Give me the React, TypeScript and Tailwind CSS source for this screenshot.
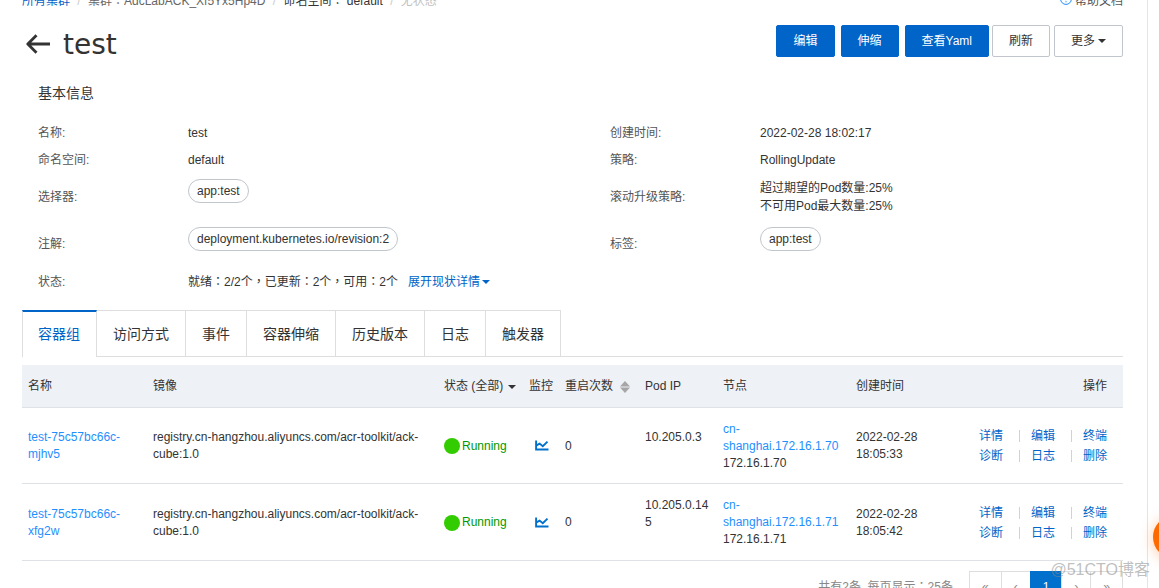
import React from "react";

const tabs = ["容器组", "访问方式", "事件", "容器伸缩", "历史版本", "日志", "触发器"];

const pods = [
  { name: "test-75c57bc66c-mjhv5", ip: "10.205.0.3", node: "cn-shanghai.172.16.1.70", nodeIp: "172.16.1.70", date: "2022-02-28", time: "18:05:33" },
  { name: "test-75c57bc66c-xfg2w", ip: "10.205.0.145", node: "cn-shanghai.172.16.1.71", nodeIp: "172.16.1.71", date: "2022-02-28", time: "18:05:42" },
];

const actions = ["详情", "编辑", "终端", "诊断", "日志", "删除"];

const image = "registry.cn-hangzhou.aliyuncs.com/acr-toolkit/ack-cube:1.0";

function Caret() {
  return (
    <svg width="8" height="4" viewBox="0 0 8 4" className="inline-block shrink-0" aria-hidden="true">
      <path d="M0 0h8L4 4z" fill="currentColor" />
    </svg>
  );
}

function Pill({ children }: { children: React.ReactNode }) {
  return (
    <span className="inline-flex h-6 items-center rounded-full border border-[#c0c6cc] px-2 text-[#333]">{children}</span>
  );
}

function Field({ label, className, children }: { label: string; className: string; children?: React.ReactNode }) {
  return (
    <div className={`flex ${className}`}>
      <dt className="w-[150px] shrink-0 self-center text-[#555]">{label}</dt>
      <dd className="min-w-0">{children}</dd>
    </div>
  );
}

function Primary({ children }: { children: React.ReactNode }) {
  return (
    <button type="button" className="h-8 rounded-xs border border-[#0064c8] bg-[#0064c8] px-4 text-white">{children}</button>
  );
}

function Secondary({ children }: { children: React.ReactNode }) {
  return (
    <button type="button" className="flex h-8 items-center gap-[3px] rounded-xs border border-[#c0c6cc] bg-white px-4 text-[#333]">{children}</button>
  );
}

function ChartIcon() {
  return (
    <svg width="14" height="12" viewBox="0 0 14 12" fill="none" stroke="#0070cc" strokeWidth="1.9" aria-hidden="true">
      <path d="M1.1 0.500v9H13.500" />
      <path d="M1.500 5.300 4.600 3.600l3.200 2.600L12.500 1.600" />
    </svg>
  );
}

export default function App() {
  return (
    <div className="relative flex h-screen overflow-hidden bg-white font-['Liberation_Sans','Noto_Sans_CJK_SC',sans-serif] text-xs leading-[18px] text-[#333]">
      <main className="-mt-2 min-w-0 flex-1 border-r border-[#e3e4e6] pr-6 pl-[22px]">
        <div className="flex justify-between">
          <nav className="flex font-['Liberation_Sans','Noto_Sans_CJK_TC',sans-serif]" aria-label="breadcrumb">
            <a href="#clusters" className="text-[#0064c8]">所有集群</a>
            <span className="w-[18px] text-center text-[#ccc]">/</span>
            <span className="text-[#666]">集群：AdcLabACK_Xf5Yx5Hp4D</span>
            <span className="w-[18px] text-center text-[#ccc]">/</span>
            <span>命名空间： default</span>
            <span className="w-[18px] text-center text-[#ccc]">/</span>
            <span className="text-[#c1c1c1]">无状态</span>
          </nav>
          <a href="#help" className="flex items-center gap-[3px] text-[#555]">
            <svg width="12" height="12" viewBox="0 0 12 12" className="-mt-1" fill="none" stroke="#1e8fff" aria-hidden="true">
              <circle cx="6" cy="6" r="5.4" />
              <path d="M4.3 4.7c0-2.3 3.4-2.2 3.4-.1C7.700 5.800 6 5.700 6 7.200M6 8.200v1.100" />
            </svg>
            帮助文档
          </a>
        </div>

        <header className="mt-[15px] flex items-start justify-between">
          <div className="flex items-start gap-3 pt-0.5 pl-1">
            <button type="button" aria-label="返回" className="pt-[7px] text-[#333]">
              <svg width="25" height="20" viewBox="0 0 25 20" fill="none" stroke="currentColor" strokeWidth="2.800" strokeLinejoin="round" aria-hidden="true">
                <path d="M24 10H2M10.500 1.200 1.800 10l8.700 8.800" />
              </svg>
            </button>
            <h1 className="font-['DejaVu_Sans',sans-serif] text-[28px] leading-9">test</h1>
          </div>
          <div className="flex gap-[3px]">
            <div className="flex gap-1.5">
              <Primary>编辑</Primary>
              <Primary>伸缩</Primary>
              <Primary>查看Yaml</Primary>
            </div>
            <div className="flex gap-1">
              <Secondary>刷新</Secondary>
              <Secondary>更多<Caret /></Secondary>
            </div>
          </div>
        </header>

        <section className="pt-5 pl-4">
          <h2 className="text-sm leading-5">基本信息</h2>
          <dl className="mt-4 grid grid-cols-[572fr_513fr]">
            <Field label="名称:" className="h-[27px] items-center">test</Field>
            <Field label="创建时间:" className="h-[27px] items-center">2022-02-28 18:02:17</Field>
            <Field label="命名空间:" className="h-[27px] items-center">default</Field>
            <Field label="策略:" className="h-[27px] items-center">RollingUpdate</Field>
            <Field label="选择器:" className="h-12 items-start pt-1.5 pb-1.5"><Pill>app:test</Pill></Field>
            <Field label="滚动升级策略:" className="h-12 items-center">
              <p>超过期望的Pod数量:25%</p>
              <p>不可用Pod最大数量:25%</p>
            </Field>
            <Field label="注解:" className="h-[46px] items-start pt-1.5 pb-1.5"><Pill>deployment.kubernetes.io/revision:2</Pill></Field>
            <Field label="标签:" className="h-[46px] items-start pt-1.5 pb-1.5"><Pill>app:test</Pill></Field>
            <Field label="状态:" className="col-span-2 h-[30px] items-center">
              <div className="flex gap-2.5">
                <span className="font-['Liberation_Sans','Noto_Sans_CJK_TC',sans-serif]">就绪：2/2个，已更新：2个，可用：2个</span>
                <button type="button" className="flex items-center gap-0.5 text-[#0064c8]">展开现状详情<Caret /></button>
              </div>
            </Field>
          </dl>
        </section>

        <div role="tablist" className="mt-[13px] flex border-b border-[#dedede] text-sm">
          {tabs.map((tab, i) => (
            <button
              key={tab}
              type="button"
              role="tab"
              aria-selected={i === 0}
              className={
                i === 0
                  ? "-mb-px h-[47px] border-t-2 border-r border-l border-t-[#0064c8] border-r-[#dedede] border-l-[#dedede] bg-white pr-4 pb-0.5 pl-[15px] text-[#0064c8]"
                  : "h-[46px] border-t border-r border-[#dedede] px-4"
              }
            >
              {tab}
            </button>
          ))}
        </div>

        <table className="mt-2 w-full table-fixed border-collapse text-left leading-[17px]">
          <colgroup>
            <col className="w-[125px]" />
            <col />
            <col className="w-[85px]" />
            <col className="w-[36px]" />
            <col className="w-[80px]" />
            <col className="w-[78px]" />
            <col className="w-[133px]" />
            <col className="w-[100px]" />
            <col className="w-[173px]" />
          </colgroup>
          <thead>
            <tr className="h-[42px] border-b border-[#dee2e6] bg-[#eef1f6] whitespace-nowrap *:pt-0.5 *:pl-1.5 *:font-normal">
              <th>名称</th>
              <th>镜像</th>
              <th><button type="button" className="flex items-center gap-[5px]">状态 (全部)<Caret /></button></th>
              <th>监控</th>
              <th>
                <button type="button" className="flex items-center gap-[7px]">
                  重启次数
                  <svg width="10" height="12" viewBox="0 0 10 12" fill="#a6a6a6" aria-hidden="true">
                    <path d="M5 0l5 5.500H0zM0 6.500h10l-5 5.500z" />
                  </svg>
                </button>
              </th>
              <th>Pod IP</th>
              <th>节点</th>
              <th>创建时间</th>
              <th className="pr-4 text-right">操作</th>
            </tr>
          </thead>
          <tbody>
            {pods.map((pod) => (
              <tr key={pod.name} className="h-[76px] border-b border-[#dee2e6] last:h-[77px] *:pt-0.5 *:pl-1.5">
                <td className="pr-2"><a href="#pod" className="text-[#1e8fff]">{pod.name}</a></td>
                <td className="pr-2">{image}</td>
                <td>
                  <span className="flex items-center gap-0.5 text-[#090]">
                    <span className="size-4 rounded-full bg-[#3c0]" />
                    Running
                  </span>
                </td>
                <td><button type="button" aria-label="监控" className="block pl-1.5"><ChartIcon /></button></td>
                <td>0</td>
                <td className="pr-1.5 pb-[17px] break-all">{pod.ip}</td>
                <td><a href="#node" className="text-[#1e8fff]">{pod.node}</a><div>{pod.nodeIp}</div></td>
                <td>{pod.date}<br />{pod.time}</td>
                <td className="pr-4">
                  <div className="grid grid-cols-[repeat(3,auto)] justify-end leading-5">
                    {actions.map((action, i) => (
                      <span key={action} className="flex items-center">
                        {i % 3 !== 0 && <span className="mr-[11px] ml-4 h-3 w-px bg-[#ccd3dc]" />}
                        <a href="#action" className="text-[#0064c8]">{action}</a>
                      </span>
                    ))}
                  </div>
                </td>
              </tr>
            ))}
          </tbody>
        </table>

        <footer className="mt-2.5 flex items-center justify-end gap-4 text-[#888]">
          <span className="whitespace-pre font-['Liberation_Sans','Noto_Sans_CJK_TC',sans-serif]">共有2条  每页显示：25条</span>
          <div className="flex *:h-8 *:border *:px-3">
            <button type="button" className="border-[#dedede]">«</button>
            <button type="button" className="-ml-px border-[#dedede]">‹</button>
            <button type="button" className="-ml-px border-[#0070cc] bg-[#0070cc] text-white">1</button>
            <button type="button" className="-ml-px border-[#dedede]">›</button>
            <button type="button" className="-ml-px border-[#dedede]">»</button>
          </div>
        </footer>
      </main>
      <aside className="w-[11px] shrink-0" />

      <button type="button" aria-label="客服" className="absolute top-[515px] -right-[38px] size-11 rounded-full bg-[#ff6a00] shadow-[0_2px_14px_rgba(255,106,0,0.35)]" />
      <div className="pointer-events-none absolute right-[9px] bottom-1.5 text-base leading-6 text-[#888]/55">@51CTO博客</div>
    </div>
  );
}
